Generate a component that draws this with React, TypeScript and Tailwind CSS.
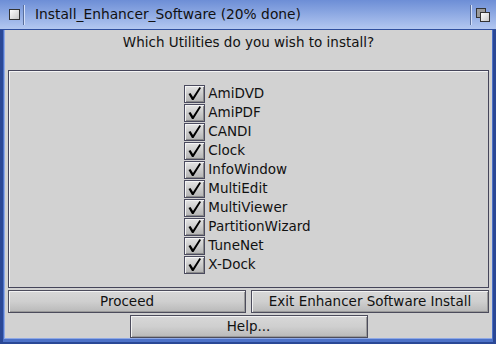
import { ReactNode } from 'react'

const utilities = [
  'AmiDVD',
  'AmiPDF',
  'CANDI',
  'Clock',
  'InfoWindow',
  'MultiEdit',
  'MultiViewer',
  'PartitionWizard',
  'TuneNet',
  'X-Dock',
]

const font = { fontFamily: '"DejaVu Sans", Verdana, sans-serif' }

const Check = () => (
  <div className="w-[21px] h-[18px] border border-[#4a4a5e] bg-gradient-to-b from-[#e4e4e4] to-[#b4b4b4] shadow-[inset_1px_1px_0_#f4f4f4,inset_-1px_-1px_0_#8a8a8a] flex items-center justify-center">
    <svg width="15" height="15" viewBox="0 0 15 15">
      <path d="M1.5 8 L3.5 7 L6 11 L12.5 1 L14 2 L6.5 14 L5 14 Z" fill="#000" />
    </svg>
  </div>
)

const Button = ({ children, className = '' }: { children: ReactNode; className?: string }) => (
  <button
    type="button"
    className={`h-[23px] border border-[#4c4c5c] bg-gradient-to-b from-[#d8d8d8] via-[#cfcfcf] to-[#b9b9b9] shadow-[inset_1px_1px_0_#f2f2f2,inset_-1px_-1px_0_#9a9a9a] text-[13.5px] text-[#111] leading-none flex items-center justify-center ${className}`}
  >
    {children}
  </button>
)

const App = () => {
  return (
    <div
      className="w-[496px] h-[344px] bg-[#4d72c8] border-l-[3px] border-r-[3px] border-b-[2px] border-[#2a4896] flex flex-col"
      style={font}
    >
      {/* title bar */}
      <div className="h-[30px] shrink-0 flex items-center bg-gradient-to-b from-[#6d8ed6] to-[#b3c7f0] border-b border-[#2f4f9e] -mx-[3px] px-[3px]">
        <div className="w-[20px] flex justify-center pl-[2px]">
          <div className="w-[11px] h-[11px] border border-[#333] bg-gradient-to-br from-white to-[#c8c8c8]" />
        </div>
        <div className="w-[2px] h-[20px] border-l border-[#5a6f9c] border-r border-r-[#d4e0fa]" />
        <div className="ml-[10px] text-[13.8px] text-[#111] grow">Install_Enhancer_Software (20% done)</div>
        <div className="w-[2px] h-[20px] border-l border-[#5a6f9c] border-r border-r-[#d4e0fa]" />
        <div className="w-[21px] flex justify-center">
          <div className="relative w-[14px] h-[14px]">
            <div className="absolute left-0 top-0 w-[10px] h-[10px] border border-[#333] bg-[#9a9a9a]" />
            <div className="absolute left-[4px] top-[4px] w-[10px] h-[10px] border border-[#333] bg-gradient-to-br from-white to-[#c8c8c8]" />
          </div>
        </div>
      </div>

      {/* body */}
      <div className="grow mx-[1px] mb-[3px] bg-[#d2d2d2] border-l border-[#8fa9e6] border-b border-b-[#8fa9e6] flex flex-col px-[3px]">
        <div className="text-[13.5px] text-[#111] text-center leading-[16px] mt-[4px]">
          Which Utilities do you wish to install?
        </div>

        <div className="mt-[20px] h-[218px] border border-[#45455a] shadow-[inset_1px_1px_0_#f4f4f4] flex flex-col items-center justify-center">
          <div className="flex flex-col gap-[1px] -ml-[2px]">
            {utilities.map((name) => (
              <div key={name} className="flex items-center h-[18px]">
                <Check />
                <span className="ml-[3px] text-[13.5px] text-[#111] leading-none">{name}</span>
              </div>
            ))}
          </div>
        </div>

        <div className="mt-[2px] grid grid-cols-2 gap-[5px]">
          <Button>Proceed</Button>
          <Button>Exit Enhancer Software Install</Button>
        </div>
        <div className="mt-[2px] flex justify-center">
          <Button className="w-[238px]">Help...</Button>
        </div>
      </div>
    </div>
  )
}

export default App
